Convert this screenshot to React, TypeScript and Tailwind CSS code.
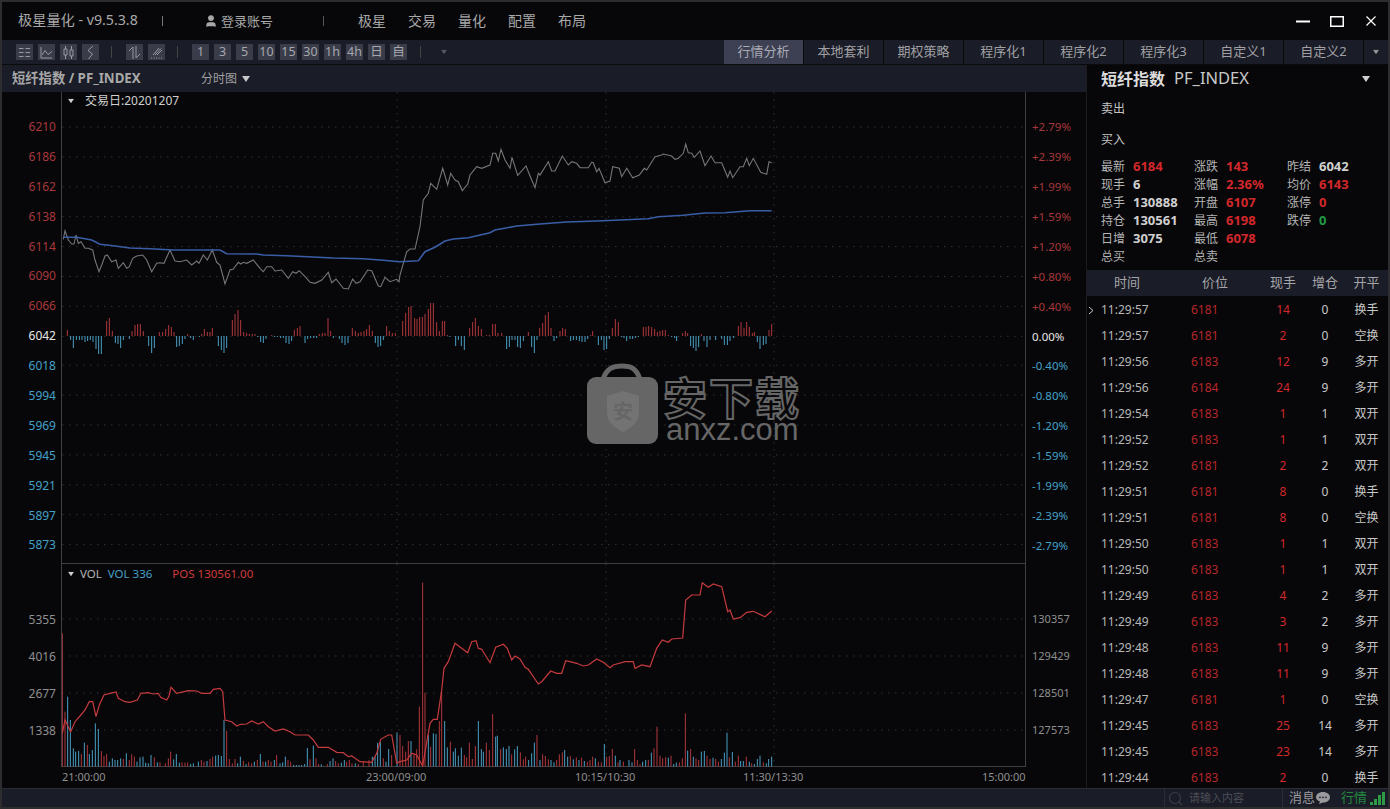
import { User } from 'lucide-react'

// traced from the chart, in 3x crop coordinates: [x, y]
const priceA = [190,418,195,392,205,420,215,432,222,432,228,405,235,430,243,425,255,445,265,445,278,450,285,480,297,515,305,495,315,468,322,465,335,485,348,480,355,505,370,488,380,505,388,500,398,475,410,468,428,465,440,480,455,515,470,490,480,488,492,490,510,450,525,483,540,485,560,480,575,495,590,483,597,490,610,465,622,480,637,450,650,487,660,495,675,552,690,510,700,507,715,487,722,492,730,487,740,490,760,480,780,505,790,515,800,500,815,500,825,513,845,510,865,535,878,515,888,520,898,512,920,535,930,547,945,550,965,540,985,517,995,548,1008,537,1030,565,1045,567,1058,537,1068,550,1080,545,1103,510,1115,512,1135,558,1142,560,1155,532,1170,545,1190,538,1197,545]
const priceB = [0,525,20,455,30,447,45,447,60,380,70,300,85,280,92,250,110,268,128,205,143,255,152,220,165,240,175,245,187,272,203,252,210,225,230,200,245,205,270,195,278,160,287,160,295,183,303,148,315,180,330,205,336,172,353,226,378,198,395,240,405,263,415,220,420,225,445,185,455,213,465,213,487,168,505,195,515,185,530,190,540,203,565,203,575,187,580,188,590,215,597,205,615,248,630,243,638,200,658,205,665,230,680,205,698,233,718,225,733,205,740,210,765,170,785,165,790,162,815,168,825,178,835,175,850,160,857,132,865,158,875,160,883,172,900,153,915,197,933,168,945,188,965,188,983,232,990,213,998,233,1020,200,1030,200,1040,175,1048,197,1060,175,1082,217,1100,223,1107,185,1115,188]
const avgA = [190,412,230,412,275,420,300,433,340,437,390,444,450,446,520,450,660,450,680,461,770,462,790,465,860,467,1000,474,1090,476,1150,481,1197,485]
const avgB = [0,485,55,482,75,455,105,442,135,423,160,417,205,413,270,398,285,390,350,378,420,372,500,366,610,362,745,356,775,350,850,346,915,339,975,338,1050,332,1115,332]
const posA = [187,520,195,480,212,515,225,485,240,468,255,450,268,425,278,425,288,470,298,435,312,405,330,400,348,396,355,415,375,425,390,427,412,420,423,400,445,398,460,402,475,400,482,412,500,420,507,408,513,382,530,400,565,392,590,393,605,400,630,400,640,388,660,385,668,395,675,480,695,485,710,498,722,493,740,492,755,483,775,492,790,485,805,500,825,513,850,507,870,515,885,525,925,525,940,540,955,562,985,562,1010,577,1030,578,1045,590,1055,588,1080,605,1115,607,1130,580,1142,538,1165,525,1175,525,1190,610,1199,605]
const posB = [0,605,20,600,35,580,50,585,68,618,78,560,90,490,100,478,112,478,125,390,132,325,145,305,165,250,203,278,215,245,228,242,235,265,245,268,270,308,287,262,310,253,322,265,335,300,345,288,360,297,375,322,385,328,415,372,425,365,452,333,470,340,485,340,497,302,510,305,530,310,550,318,565,315,590,297,610,307,630,323,640,315,675,305,700,305,705,325,725,315,750,320,770,265,787,240,805,247,815,237,848,234,857,120,875,105,900,105,907,68,925,82,940,72,965,80,983,155,990,150,1000,177,1020,173,1040,157,1060,154,1095,170,1115,153]

// price minus average bars: [x, signed height px], positive is red
const diffA = [202,6,212,-4,220,-12,229,-4,238,-4,246,-4,255,-6,263,-5,271,-4,279,-6,288,-13,296,-18,304,-18,320,15,328,18,337,5,346,-7,354,-8,362,-12,370,-4,388,-3,396,5,405,11,413,12,421,12,430,5,446,-10,455,-17,463,-12,478,4,488,4,497,7,506,11,514,9,522,4,530,-11,538,-10,547,-8,555,-3,563,2,572,-2,580,-4,598,-1,605,2,613,7,622,4,630,4,637,8,655,-10,664,-14,672,-17,680,-12,697,16,705,22,714,26,722,16,731,4,740,3,748,2,757,2,765,2,773,-1,782,-6,790,-7,798,-3,815,1,824,-1,832,-1,842,-2,850,-2,858,-7,867,-8,875,-5,883,6,892,8,900,10,915,-7,923,-3,932,-2,941,-2,950,-2,958,2,967,3,975,3,984,18,992,5,1000,-2,1018,-3,1026,-7,1035,-9,1044,-7,1057,8,1066,5,1075,3,1083,4,1092,5,1100,7,1108,11,1117,5,1126,-7,1134,-11,1142,-10,1150,-4,1160,10,1168,5,1177,3,1186,3]
const diffB = [8,15,17,23,26,29,33,30,44,18,51,17,59,19,67,19,75,22,85,27,92,33,100,33,110,14,118,5,127,15,134,15,142,1,150,-1,167,-10,175,-4,184,-10,193,-14,209,8,218,14,226,18,235,10,244,7,260,1,268,1,278,12,286,12,294,3,305,3,320,-13,328,-11,336,-4,345,-4,353,-11,361,-12,370,-5,385,4,395,-11,403,-17,411,-4,419,8,428,13,436,21,445,24,453,8,462,-5,470,-2,480,5,488,8,496,7,512,-5,520,-4,529,-4,538,-5,546,-6,555,-6,563,-3,572,1,578,5,595,-9,604,-4,612,-14,620,-13,628,-3,637,8,646,17,655,14,664,-1,672,-2,680,-5,690,-3,698,-3,706,-2,715,-1,730,9,738,9,746,10,755,9,764,7,772,4,780,5,788,6,796,6,805,1,815,-1,824,-2,830,-5,848,3,856,5,863,3,872,-10,880,-12,888,-15,896,-11,904,2,912,-5,921,-11,930,-4,947,-4,965,-3,973,-9,982,-9,990,-5,1000,-2,1015,10,1023,14,1032,8,1040,14,1048,9,1057,3,1063,4,1072,-6,1080,-13,1090,-9,1098,-8,1107,6,1115,12]

// volume bars: [x, top y], both in crop coordinates
const volRedA = [187,220,195,455,244,582,262,555,304,573,312,588,320,582,370,597,388,600,395,583,403,590,463,592,480,607,496,610,505,595,512,575,546,607,555,608,563,608,604,600,612,605,630,597,638,590,680,512,688,597,697,610,705,597,730,603,746,606,755,610,772,600,789,605,805,600,813,605,830,585,864,600,872,605,930,598,948,595,956,612,982,612,1007,603,1015,610,1040,605,1048,600,1056,610,1075,612,1090,605,1107,600,1150,595,1175,585]
const volBlueA = [203,410,211,480,220,565,227,575,236,573,253,548,268,582,277,570,286,490,295,507,328,605,337,595,345,600,353,600,362,595,379,580,411,605,420,592,429,590,437,608,445,610,453,585,472,607,521,598,529,582,538,608,572,612,580,610,595,605,621,603,647,587,655,585,664,588,672,480,713,610,721,590,738,612,763,605,781,582,797,605,823,600,840,610,848,607,856,590,881,615,889,615,897,615,905,615,914,612,922,564,940,557,964,613,990,603,999,595,1024,608,1033,600,1066,610,1117,590,1125,590,1133,548,1141,545,1158,605,1166,567,1191,518]
const volRedB = [0,525,8,558,17,575,25,543,42,580,50,568,58,440,68,68,75,398,92,560,118,483,125,395,151,545,193,585,200,592,208,548,217,597,226,558,259,548,268,570,278,462,302,567,335,583,361,577,370,598,377,590,411,525,428,583,436,588,445,598,470,600,478,583,487,577,511,588,529,592,545,593,562,605,570,600,578,590,595,605,604,607,620,590,628,588,637,567,654,607,670,605,704,567,712,600,720,612,745,600,762,565,771,500,780,587,788,595,797,592,813,587,838,607,847,595,856,460,872,567,888,595,896,600,921,587,930,597,947,597,955,605,988,592,1006,605,1015,587,1039,590,1055,610,1090,607]
const volBlueB = [33,543,85,525,100,520,108,522,134,483,142,562,160,575,166,565,175,587,184,563,235,483,244,567,250,575,287,530,292,527,310,562,319,567,327,558,344,568,352,558,386,600,395,580,403,548,420,600,453,600,462,607,494,570,503,590,520,598,537,600,553,603,586,595,613,552,646,587,660,600,687,600,696,607,728,605,737,600,754,578,805,593,821,612,829,608,863,572,880,590,904,575,913,573,939,593,964,597,973,578,981,518,997,576,1022,603,1030,603,1048,605,1063,612,1072,597,1080,587,1099,610,1106,597,1115,590]

const pairs = (a: number[]) => {
  const out: [number, number][] = []
  for (let i = 0; i < a.length; i += 2) out.push([a[i], a[i + 1]])
  return out
}

const line = (a: number[], ox: number, oy: number) =>
  pairs(a).map(([x, y]) => `${(ox + x / 3).toFixed(1)},${(oy + y / 3).toFixed(1)}`).join(' ')

const leftPrices = [
  ['6210', 'r'], ['6186', 'r'], ['6162', 'r'], ['6138', 'r'], ['6114', 'r'], ['6090', 'r'], ['6066', 'r'],
  ['6042', 'w'],
  ['6018', 'b'], ['5994', 'b'], ['5969', 'b'], ['5945', 'b'], ['5921', 'b'], ['5897', 'b'], ['5873', 'b'],
]
const rightPct = [
  ['+2.79%', 'r'], ['+2.39%', 'r'], ['+1.99%', 'r'], ['+1.59%', 'r'], ['+1.20%', 'r'], ['+0.80%', 'r'], ['+0.40%', 'r'],
  ['0.00%', 'w'],
  ['-0.40%', 'b'], ['-0.80%', 'b'], ['-1.20%', 'b'], ['-1.59%', 'b'], ['-1.99%', 'b'], ['-2.39%', 'b'], ['-2.79%', 'b'],
]
const axisColor: Record<string, string> = { r: 'text-[#a8383c]', w: 'text-[#e8e8e8]', b: 'text-[#45a0c8]' }

const ticks = [
  ['11:29:57', '6181', '14', '0', '换手'],
  ['11:29:57', '6181', '2', '0', '空换'],
  ['11:29:56', '6183', '12', '9', '多开'],
  ['11:29:56', '6184', '24', '9', '多开'],
  ['11:29:54', '6183', '1', '1', '双开'],
  ['11:29:52', '6183', '1', '1', '双开'],
  ['11:29:52', '6181', '2', '2', '双开'],
  ['11:29:51', '6181', '8', '0', '换手'],
  ['11:29:51', '6181', '8', '0', '空换'],
  ['11:29:50', '6183', '1', '1', '双开'],
  ['11:29:50', '6183', '1', '1', '双开'],
  ['11:29:49', '6183', '4', '2', '多开'],
  ['11:29:49', '6183', '3', '2', '多开'],
  ['11:29:48', '6183', '11', '9', '多开'],
  ['11:29:48', '6183', '11', '9', '多开'],
  ['11:29:47', '6181', '1', '0', '空换'],
  ['11:29:45', '6183', '25', '14', '多开'],
  ['11:29:45', '6183', '23', '14', '多开'],
  ['11:29:44', '6183', '2', '0', '换手'],
]

const stats = [
  [['最新', '6184', 'r'], ['现手', '6', 'w'], ['总手', '130888', 'w'], ['持仓', '130561', 'w'], ['日增', '3075', 'w'], ['总买', '', 'w']],
  [['涨跌', '143', 'r'], ['涨幅', '2.36%', 'r'], ['开盘', '6107', 'r'], ['最高', '6198', 'r'], ['最低', '6078', 'r'], ['总卖', '', 'w']],
  [['昨结', '6042', 'w'], ['均价', '6143', 'r'], ['涨停', '0', 'r'], ['跌停', '0', 'g']],
]
const statColor: Record<string, string> = { r: 'text-[#d2272b]', w: 'text-[#d0d0d0]', g: 'text-[#1f9a45]' }

const tabs = ['行情分析', '本地套利', '期权策略', '程序化1', '程序化2', '程序化3', '自定义1', '自定义2']
const menus = ['极星', '交易', '量化', '配置', '布局']
const periods = ['1', '3', '5', '10', '15', '30', '1h', '4h', '日', '自']

function ToolButton({ children }: { children: React.ReactNode }) {
  return (
    <div className="w-[17px] h-[16px] bg-[#3a3d49] flex items-center justify-center text-[12.5px] leading-none text-[#a5a7ad]">
      {children}
    </div>
  )
}

const Glyph = ({ d }: { d: string }) => (
  <svg width="13" height="13" viewBox="0 0 13 13" fill="none" stroke="#969aa0" strokeWidth="1">
    <path d={d} />
  </svg>
)

function Triangle({ className = '' }: { className?: string }) {
  return (
    <svg width="8" height="6" viewBox="0 0 8 6" className={className} fill="currentColor">
      <path d="M0 0H8L4 6Z" />
    </svg>
  )
}

const gridDots = '#323235'
const barRed = '#b0373c'
const barBlue = '#4a9fc4'

function PriceChart() {
  const rows = [127, 156.9, 186.8, 216.7, 246.6, 276.5, 306.4, 336.3, 365.2, 395.1, 425, 454.9, 484.8, 514.7, 544.6]
  return (
    <svg className="block w-[963px] h-[471px]" viewBox="62 92 963 471">
      {rows.map((y) => (
        <line key={y} x1="62" x2="1026" y1={y} y2={y} stroke={gridDots} strokeDasharray="1.5 5.5" />
      ))}
      {[397, 606, 774].map((x) => (
        <line key={x} x1={x} x2={x} y1="92" y2="563" stroke={gridDots} strokeDasharray="1.5 5.5" />
      ))}
      {pairs(diffA).map(([x, h]) => (
        <line key={`a${x}`} x1={x / 3} x2={x / 3} y1="336" y2={336 - h} stroke={h > 0 ? barRed : barBlue} />
      ))}
      {pairs(diffB).map(([x, h]) => (
        <line key={`b${x}`} x1={400 + x / 3} x2={400 + x / 3} y1="336" y2={336 - h} stroke={h > 0 ? barRed : barBlue} />
      ))}
      <polyline points={line(priceA, 0, 100) + ' ' + line(priceB, 400, 100)} fill="none" stroke="#767676" strokeWidth="1.1" />
      <polyline points={line(avgA, 0, 100) + ' ' + line(avgB, 400, 100)} fill="none" stroke="#3a5ea6" strokeWidth="1.6" />
    </svg>
  )
}

function VolumeChart() {
  const base = 766.5
  const bar = (a: number[], ox: number, color: string) =>
    pairs(a).map(([x, y]) => (
      <line key={`${ox}${color}${x}`} x1={ox + x / 3} x2={ox + x / 3} y1={base} y2={560 + y / 3} stroke={color} />
    ))
  return (
    <svg className="block w-[963px] h-[203px]" viewBox="62 564 963 203">
      {[619, 656, 693, 730].map((y) => (
        <line key={y} x1="62" x2="1026" y1={y} y2={y} stroke={gridDots} strokeDasharray="1.5 5.5" />
      ))}
      {[397, 606, 774].map((x) => (
        <line key={x} x1={x} x2={x} y1="564" y2="767" stroke={gridDots} strokeDasharray="1.5 5.5" />
      ))}
      {bar(volRedA, 0, barRed)}
      {bar(volBlueA, 0, barBlue)}
      {bar(volRedB, 400, barRed)}
      {bar(volBlueB, 400, barBlue)}
      <polyline points={line(posA, 0, 560) + ' ' + line(posB, 400, 560)} fill="none" stroke="#c63b3e" strokeWidth="1.2" />
    </svg>
  )
}

function Watermark() {
  return (
    <div className="absolute left-[583px] top-[361px] flex items-start gap-[4px] pointer-events-none">
      <svg width="73" height="82" viewBox="0 0 73 82">
        <path d="M18 16C22 5 28 3 37 3C46 3 51 5 55 16" fill="none" stroke="#666" strokeWidth="5" />
        <rect x="2" y="14" width="71" height="67" rx="9" fill="#666" />
        <path d="M22 33L38 28L54 33V50C54 59 46 65 38 69C30 65 22 59 22 50Z" fill="#737373" />
        <text x="38" y="56" textAnchor="middle" fontSize="20" fill="#666" fontWeight="700">安</text>
      </svg>
      <div className="flex flex-col items-start pt-[13px] pl-[1px]">
        <span className="text-[44px] leading-[44px] font-bold tracking-[2px] text-transparent [-webkit-text-stroke:2px_#666]">安下载</span>
        <span className="text-[31px] leading-[20px] ml-[3px] text-[#666] font-['Liberation_Sans',sans-serif]">anxz.com</span>
      </div>
    </div>
  )
}

export default function App() {
  return (
    <div className="relative w-[1390px] h-[809px] overflow-hidden bg-[#070709] border-2 border-[#2d2d2f] flex flex-col font-['Noto_Sans','Noto_Sans_CJK_SC',sans-serif] text-[12px] text-[#b8b8b8]">
      {/* title bar */}
      <div className="h-[38px] shrink-0 flex items-center text-[14px] text-[#a8a8a8]">
        <span className="ml-[16px] w-[144px] text-[14.2px] -mt-[2px]">极星量化 - v9.5.3.8</span>
        <span className="w-px h-[10px] bg-[#777]" />
        <User className="ml-[41px] w-[14px] h-[14px] text-[#a8a8a8]" fill="#a8a8a8" />
        <span className="ml-[3px] w-[102px] text-[13px] mt-[1px]">登录账号</span>
        <span className="w-px h-[10px] bg-[#555]" />
        <div className="ml-[34px] flex gap-[22px] -mt-[2px]">
          {menus.map((m) => (
            <span key={m} className="w-[28px] whitespace-nowrap">{m}</span>
          ))}
        </div>
        <div className="ml-auto flex items-center">
          <svg width="14" height="14" viewBox="0 0 14 14" className="mr-[20px]"><path d="M0 7.5H14" stroke="#fff" strokeWidth="2" /></svg>
          <svg width="14" height="11" viewBox="0 0 14 11" className="mr-[22px]"><rect x="0.75" y="0.75" width="12.5" height="9.5" fill="none" stroke="#fff" strokeWidth="1.5" /></svg>
          <svg width="10" height="10" viewBox="0 0 10 10" className="mr-[12px]"><path d="M0.5 0.5L9.5 9.5M9.5 0.5L0.5 9.5" stroke="#fff" strokeWidth="1.2" /></svg>
        </div>
      </div>

      {/* toolbar and tabs */}
      <div className="h-[25px] shrink-0 bg-[#1a1c27] flex items-center border-b border-[#0b0b0e]">
        <div className="ml-[14px] flex gap-[5px]">
          <ToolButton><Glyph d="M1 2.5H5.5M7.5 2.5H12M1 6.5H5.5M7.5 6.5H12M1 10.5H5.5M7.5 10.5H12" /></ToolButton>
          <ToolButton><Glyph d="M1 1V12H12M2 9L5 4.5L8 8.5L12 5.5" /></ToolButton>
          <ToolButton><Glyph d="M2 3H5V9H2ZM3.5 0V3M3.5 9V13M8 4H11V10H8ZM9.5 0V4M9.5 10V13" /></ToolButton>
          <ToolButton><Glyph d="M9 0L4 4.5L8.5 8L4.5 13" /></ToolButton>
        </div>
        <span className="ml-[12px] w-px h-[12px] bg-[#444]" />
        <div className="ml-[14px] flex gap-[5px]">
          <ToolButton><Glyph d="M5 13V1L1 5M8 0V12L12 8" /></ToolButton>
          <ToolButton><Glyph d="M3 9L9 2M5 9L11 2.5M7 9L12 4M1 12H2M3.5 12H4.5M6 12H7M8.5 12H9.5M11 12H12" /></ToolButton>
        </div>
        <span className="ml-[12px] w-px h-[12px] bg-[#444]" />
        <div className="ml-[14px] flex gap-[5px]">
          {periods.map((p) => (
            <ToolButton key={p}>{p}</ToolButton>
          ))}
        </div>
        <span className="ml-[13px] w-px h-[12px] bg-[#444]" />
        <Triangle className="ml-[19px] text-[#55585f] scale-75" />
        <div className="ml-auto flex h-full items-stretch">
          {tabs.map((t, i) => (
            <div
              key={t}
              className={`w-[80px] flex items-center justify-center text-[13px] border-r border-[#0b0b0e] ${i === 0 ? 'bg-[#3d4052] text-[#a9abb5]' : 'text-[#a0a0a4]'}`}
            >
              {t}
            </div>
          ))}
          <div className="w-[24px] flex items-center justify-center text-[#999]">
            <Triangle className="scale-75" />
          </div>
        </div>
      </div>

      <div className="flex-1 flex min-h-0">
        {/* chart side */}
        <div className="w-[1085px] shrink-0 flex flex-col border-r border-[#1c1c20]">
          <div className="h-[27px] shrink-0 bg-[#1a1c27] flex items-center">
            <span className="ml-[10px] w-[189px] text-[13.3px] font-bold text-[#a8a8a8]">短纤指数 / PF_INDEX</span>
            <span className="text-[12px] text-[#a0a0a0]">分时图</span>
            <Triangle className="ml-[5px] text-[#c8c8c8]" />
          </div>

          {/* price pane */}
          <div className="h-[472px] flex shrink-0">
            <div className="w-[59px] pt-[20px] pr-[5px] flex flex-col items-end shrink-0">
              {leftPrices.map(([v, c]) => (
                <div key={v} className={`h-[29.9px] flex items-center ${axisColor[c]}`}>{v}</div>
              ))}
            </div>
            <div className="relative border-l border-r border-b border-[#3f3f42] w-[965px]">
              <PriceChart />
              <div className="absolute left-[5px] top-0 flex items-center gap-[10px] h-[17px] text-[#cfcfcf]">
                <Triangle className="text-[#d0d0d0] scale-75" />
                <span>交易日:20201207</span>
              </div>
            </div>
            <div className="w-[60px] pt-[20px] pl-[6px] flex flex-col text-[11.5px] shrink-0">
              {rightPct.map(([v, c]) => (
                <div key={v} className={`h-[29.9px] flex items-center ${axisColor[c]}`}>{v}</div>
              ))}
            </div>
          </div>

          {/* volume pane */}
          <div className="h-[203px] flex shrink-0">
            <div className="w-[59px] pt-[37px] pr-[5px] flex flex-col items-end shrink-0 text-[#8f8f8f]">
              {['5355', '4016', '2677', '1338'].map((v) => (
                <div key={v} className="h-[37px] flex items-center">{v}</div>
              ))}
            </div>
            <div className="relative border-l border-r border-b border-[#3f3f42] w-[965px]">
              <VolumeChart />
              <div className="absolute left-[5px] top-0 h-[20px] flex items-center text-[11.5px]">
                <Triangle className="text-[#d0d0d0] scale-75" />
                <span className="ml-[5px] text-[#b4b4b4]">VOL</span>
                <span className="ml-[6px] text-[#45a0c8]">VOL 336</span>
                <span className="ml-[20px] text-[#d03c3c]">POS 130561.00</span>
              </div>
            </div>
            <div className="w-[60px] pt-[37px] pl-[6px] flex flex-col text-[11px] text-[#8f8f8f] shrink-0">
              {['130357', '129429', '128501', '127573'].map((v) => (
                <div key={v} className="h-[37px] flex items-center">{v}</div>
              ))}
            </div>
          </div>

          {/* time axis */}
          <div className="h-[20px] flex items-center pl-[60px] text-[11px] text-[#8f8f8f] shrink-0">
            <span className="w-[304px]">21:00:00</span>
            <span className="w-[209px]">23:00/09:00</span>
            <span className="w-[168px]">10:15/10:30</span>
            <span className="w-[239px]">11:30/13:30</span>
            <span>15:00:00</span>
          </div>
        </div>

        {/* quote side */}
        <div className="flex-1 flex flex-col min-w-0">
          <div className="h-[27px] shrink-0 flex items-center pl-[14px] text-[#c8c8c8]">
            <span className="text-[16px] font-bold text-[#dcdcdc]">短纤指数</span>
            <span className="ml-[9px] text-[16.5px]">PF_INDEX</span>
            <Triangle className="ml-auto mr-[18px] text-[#d0d0d0]" />
          </div>
          <div className="pl-[14px] h-[31px] flex items-center text-[#c4c4c4] mt-[1px]">卖出</div>
          <div className="pl-[14px] h-[31px] flex items-center text-[#c4c4c4]">买入</div>
          <div className="flex pl-[14px] h-[115px] pt-[3px]">
            {stats.map((col, i) => (
              <div key={i} className="w-[93px] flex flex-col">
                {col.map(([label, value, c]) => (
                  <div key={label} className="h-[18px] flex items-center">
                    <span className="w-[32px] text-[#b4b4b4]">{label}</span>
                    <span className={`font-bold text-[13px] ${statColor[c]}`}>{value}</span>
                  </div>
                ))}
              </div>
            ))}
          </div>
          <div className="h-[26px] shrink-0 bg-[#1a1c27] grid grid-cols-[104px_68px_48px_36px_47px] items-center text-[#a6a6aa] text-[13px]">
            <span className="pl-[27px]">时间</span>
            <span className="pl-[11px]">价位</span>
            <span className="text-center">现手</span>
            <span className="text-center">增仓</span>
            <span className="text-center">开平</span>
          </div>
          <div className="relative flex-1 overflow-hidden pt-px">
            <svg width="6" height="9" viewBox="0 0 6 9" className="absolute left-[1px] top-[10px]">
              <path d="M1 1L5 4.5L1 8" fill="none" stroke="#c8c8c8" />
            </svg>
            {ticks.map((r, i) => (
              <div key={i} className="h-[26px] grid grid-cols-[104px_68px_48px_36px_47px] items-center">
                <span className="pl-[14px] text-[#b8b8b8]">{r[0]}</span>
                <span className="text-[#b8262a]">{r[1]}</span>
                <span className="text-center text-[#d2272b]">{r[2]}</span>
                <span className="text-center text-[#c8c8c8]">{r[3]}</span>
                <span className="text-center text-[#c8c8c8]">{r[4]}</span>
              </div>
            ))}
          </div>
        </div>
      </div>

      {/* status bar */}
      <div className="h-[19px] shrink-0 bg-[#1a1c27] flex items-center border-t border-[#2d2d33]">
        <div className="ml-[1162px] w-[119px] h-full border-x border-[#2d2d33] flex items-center">
          <svg width="15" height="15" viewBox="0 0 15 15" className="ml-[3px]" fill="none" stroke="#3a3c46" strokeWidth="1.2">
            <circle cx="7" cy="7" r="5.5" />
            <path d="M11 11L14 14" />
          </svg>
          <span className="ml-[6px] text-[11px] text-[#4c4e58]">请输入内容</span>
        </div>
        <span className="ml-[6px] text-[13px] text-[#9a9a9e]">消息</span>
        <svg width="14" height="12" viewBox="0 0 14 12" className="ml-[1px]">
          <path d="M7 0C11 0 14 2.3 14 5.3S11 10.6 7 10.6L3 12L4 9.6C1.5 8.8 0 7.2 0 5.3C0 2.3 3 0 7 0Z" fill="#9a9a9e" />
          <circle cx="4" cy="5.3" r="0.9" fill="#1a1c27" />
          <circle cx="7" cy="5.3" r="0.9" fill="#1a1c27" />
          <circle cx="10" cy="5.3" r="0.9" fill="#1a1c27" />
        </svg>
        <span className="ml-[11px] text-[13px] text-[#23883e]">行情</span>
        <div className="ml-[3px] flex items-end gap-[1px] h-[14px]">
          <div className="w-[3px] h-[3px] bg-[#2f9a45]" />
          <div className="w-[3px] h-[6px] bg-[#2f9a45]" />
          <div className="w-[3px] h-[10px] bg-[#2f9a45]" />
          <div className="w-[3px] h-[13px] bg-[#2f9a45]" />
        </div>
      </div>

      <Watermark />
    </div>
  )
}
